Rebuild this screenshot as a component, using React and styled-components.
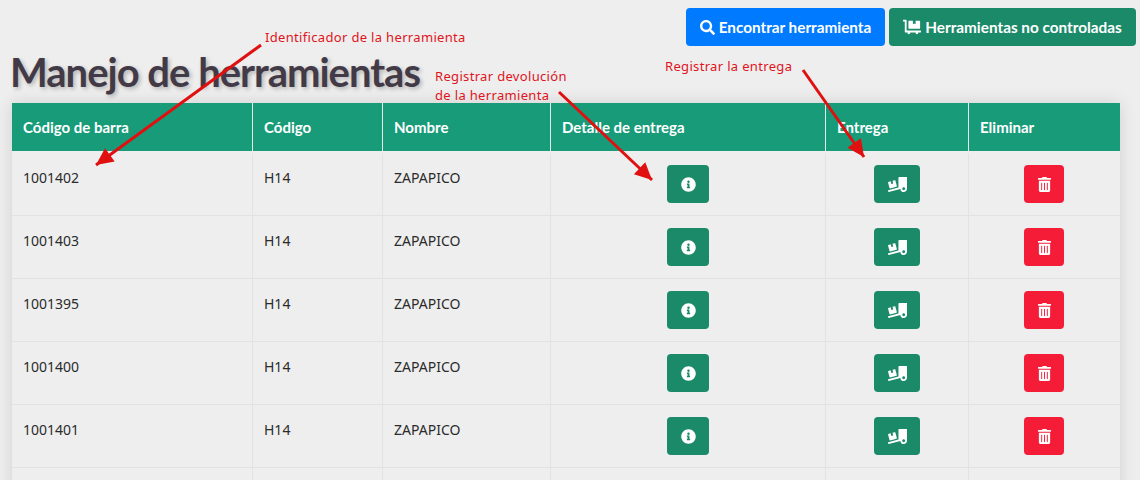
import React from "react";
import styled, { createGlobalStyle } from "styled-components";
import {
  FaSearch,
  FaDollyFlatbed,
  FaInfoCircle,
  FaTruckLoading,
  FaTrashAlt,
} from "react-icons/fa";

const rows = ["1001402", "1001403", "1001395", "1001400", "1001401"];
const columns = "241px 130px 168px 275px 143px 151px";

const GlobalStyle = createGlobalStyle`
  html, body {
    margin: 0;
    height: 480px;
    overflow: hidden;
    background: #eeeeee;
  }
`;

const Page = styled.div`
  position: relative;
  height: 480px;
  overflow: hidden;
  padding: 8px 4px 0 12px;
  box-sizing: border-box;
  font-family: "Noto Sans", sans-serif;
`;

const Toolbar = styled.div`
  display: flex;
  justify-content: flex-end;
  gap: 4px;
`;

const TopButton = styled.div`
  height: 38px;
  width: ${(p) => p.$width}px;
  box-sizing: border-box;
  display: flex;
  align-items: center;
  justify-content: center;
  gap: 4px;
  border-radius: 4px;
  color: #fff;
  font: 700 15.3px "Lato", sans-serif;
  background: ${(p) => p.$bg};
`;

const Title = styled.h1`
  margin: 0 0 0 -2px;
  height: 57px;
  padding-top: 1px;
  box-sizing: border-box;
  font: 700 40px/50px "Lato", sans-serif;
  letter-spacing: -1px;
  color: #423b47;
  text-shadow: 2px 2px 4px rgba(0, 0, 0, 0.25);
`;

const Table = styled.div`
  width: 1108px;
  box-shadow: 0 0 16px rgba(0, 0, 0, 0.12);
`;

const HeadRow = styled.div`
  display: grid;
  grid-template-columns: ${columns};
  height: 48px;
  background: #189b79;
`;

const HeadCell = styled.div`
  display: flex;
  align-items: center;
  padding-left: 11px;
  color: #fff;
  font: 700 15px "Lato", sans-serif;
  border-right: 1px solid #e4efe9;
  &:last-child {
    border-right: 0;
  }
`;

const Body = styled.div`
  padding-top: 2px;
`;

const Row = styled.div`
  display: grid;
  grid-template-columns: ${columns};
  height: 63px;
  box-sizing: border-box;
  border-bottom: 1px solid #e0e3e5;
`;

const Cell = styled.div`
  padding: 15px 0 0 11px;
  font-size: 14px;
  line-height: 20px;
  color: #2b2b2b;
  border-right: 1px solid #e0e3e5;
`;

const ActionCell = styled.div`
  display: flex;
  justify-content: center;
  padding-top: 12px;
  border-right: 1px solid #e0e3e5;
  &:last-child {
    border-right-color: transparent;
  }
`;

const ActionButton = styled.div`
  width: ${(p) => p.$width}px;
  height: 38px;
  display: flex;
  align-items: center;
  justify-content: center;
  border-radius: 4px;
  color: #fff;
  font-size: 15px;
  background: ${(p) => p.$bg};
`;

const Note = styled.div`
  position: absolute;
  left: ${(p) => p.$x}px;
  top: ${(p) => p.$y}px;
  color: #e0141c;
  font-size: 13px;
  letter-spacing: 0.33px;
  line-height: 19px;
  white-space: nowrap;
`;

const Arrows = styled.svg`
  position: absolute;
  left: 0;
  top: 0;
`;

const Arrow = ({ x1, y1, x2, y2 }) => {
  const a = Math.atan2(y2 - y1, x2 - x1);
  const len = 19;
  const wing = 0.45;
  const p1 = [x2 - len * Math.cos(a - wing), y2 - len * Math.sin(a - wing)];
  const p2 = [x2 - len * Math.cos(a + wing), y2 - len * Math.sin(a + wing)];
  return (
    <g>
      <line x1={x1} y1={y1} x2={x2} y2={y2} stroke="#e01010" strokeWidth="3" />
      <polygon points={`${x2},${y2} ${p1.join(",")} ${p2.join(",")}`} fill="#e01010" />
    </g>
  );
};

const App = () => {
  return (
    <Page>
      <GlobalStyle />
      <Toolbar>
        <TopButton $bg="#007bff" $width={199}>
          <FaSearch size={15} /> Encontrar herramienta
        </TopButton>
        <TopButton $bg="#1b8a68" $width={247}>
          <FaDollyFlatbed size={18} /> Herramientas no controladas
        </TopButton>
      </Toolbar>
      <Title>Manejo de herramientas</Title>
      <Table>
        <HeadRow>
          <HeadCell>Código de barra</HeadCell>
          <HeadCell>Código</HeadCell>
          <HeadCell>Nombre</HeadCell>
          <HeadCell>Detalle de entrega</HeadCell>
          <HeadCell>Entrega</HeadCell>
          <HeadCell>Eliminar</HeadCell>
        </HeadRow>
        <Body>
          {rows.map((code) => (
            <Row key={code}>
              <Cell>{code}</Cell>
              <Cell>H14</Cell>
              <Cell>ZAPAPICO</Cell>
              <ActionCell>
                <ActionButton $bg="#1b8a68" $width={42}>
                  <FaInfoCircle />
                </ActionButton>
              </ActionCell>
              <ActionCell>
                <ActionButton $bg="#1b8a68" $width={46}>
                  <FaTruckLoading size={19} />
                </ActionButton>
              </ActionCell>
              <ActionCell>
                <ActionButton $bg="#f51c37" $width={40}>
                  <FaTrashAlt />
                </ActionButton>
              </ActionCell>
            </Row>
          ))}
          <Row>
            <Cell />
            <Cell />
            <Cell />
            <ActionCell />
            <ActionCell />
            <ActionCell />
          </Row>
        </Body>
      </Table>
      <Arrows width="1140" height="480">
        <Arrow x1={261} y1={45} x2={96} y2={165} />
        <Arrow x1={559} y1={92} x2={652} y2={180} />
        <Arrow x1={803} y1={70} x2={864} y2={157} />
      </Arrows>
      <Note $x={265} $y={28}>Identificador de la herramienta</Note>
      <Note $x={435} $y={67}>
        Registrar devolución
        <br />
        de la herramienta
      </Note>
      <Note $x={665} $y={57}>Registrar la entrega</Note>
    </Page>
  );
};

export default App;
